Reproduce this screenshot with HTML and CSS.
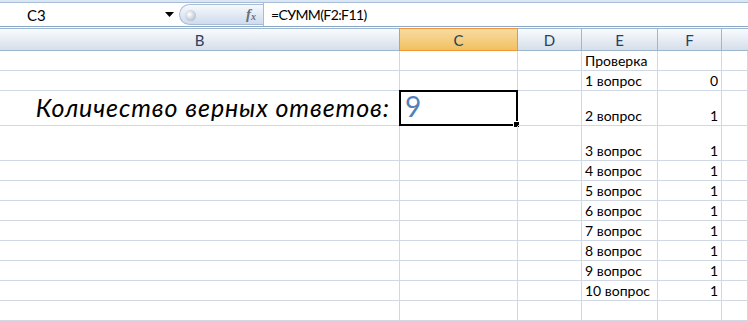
FILE: index.html
```html
<!DOCTYPE html>
<html lang="ru">
<head>
  <meta charset="UTF-8">
  <title>Проверка</title>
  <link rel="stylesheet" href="styles.css">
</head>
<body>
  <div class="ribbon-edge"></div>
  <div class="formula-bar">
    <div class="name-box">
      <span class="name">C3</span>
      <svg class="drop" width="9" height="5" viewBox="0 0 9 5"><path d="M0 0h9L4.5 5z" fill="#000"/></svg>
    </div>
    <div class="fx-pill">
      <span class="knob"></span>
      <span class="fx">f<sub>x</sub></span>
    </div>
    <div class="formula">=СУММ(F2:F11)</div>
  </div>

  <div class="sheet">
    <div class="hd">B</div>
    <div class="hd sel">C</div>
    <div class="hd">D</div>
    <div class="hd">E</div>
    <div class="hd">F</div>
    <div class="hd last"></div>

    <div class="c"></div><div class="c"></div><div class="c"></div><div class="c">Проверка</div><div class="c"></div><div class="c"></div>
    <div class="c"></div><div class="c"></div><div class="c"></div><div class="c">1 вопрос</div><div class="c num">0</div><div class="c"></div>
    <div class="c label">Количество верных ответов:</div>
    <div class="c active"><span class="big">9</span><span class="handle"></span></div>
    <div class="c"></div><div class="c">2 вопрос</div><div class="c num">1</div><div class="c"></div>
    <div class="c"></div><div class="c"></div><div class="c"></div><div class="c">3 вопрос</div><div class="c num">1</div><div class="c"></div>
    <div class="c"></div><div class="c"></div><div class="c"></div><div class="c">4 вопрос</div><div class="c num">1</div><div class="c"></div>
    <div class="c"></div><div class="c"></div><div class="c"></div><div class="c">5 вопрос</div><div class="c num">1</div><div class="c"></div>
    <div class="c"></div><div class="c"></div><div class="c"></div><div class="c">6 вопрос</div><div class="c num">1</div><div class="c"></div>
    <div class="c"></div><div class="c"></div><div class="c"></div><div class="c">7 вопрос</div><div class="c num">1</div><div class="c"></div>
    <div class="c"></div><div class="c"></div><div class="c"></div><div class="c">8 вопрос</div><div class="c num">1</div><div class="c"></div>
    <div class="c"></div><div class="c"></div><div class="c"></div><div class="c">9 вопрос</div><div class="c num">1</div><div class="c"></div>
    <div class="c"></div><div class="c"></div><div class="c"></div><div class="c">10 вопрос</div><div class="c num">1</div><div class="c"></div>
    <div class="c"></div><div class="c"></div><div class="c"></div><div class="c"></div><div class="c"></div><div class="c"></div>
  </div>
</body>
</html>
```

FILE: styles.css
```css
body {
  margin: 0;
  padding: 0;
  background: #fff;
  font-family: Lato, "Liberation Sans", sans-serif;
  overflow: hidden;
}
.ribbon-edge {
  height: 2px;
  background: #dbe6f4;
  border-bottom: 1px solid #a7bcd6;
}
.formula-bar {
  display: flex;
  height: 23px;
  border-bottom: 1px solid #8ba7c9;
  font-size: 15px;
}
.name-box {
  width: 179px;
  display: flex;
  align-items: center;
  box-sizing: border-box;
  padding: 0 5px 0 27px;
}
.name {
  flex: 1;
  color: #000;
}
.fx-pill {
  position: relative;
  width: 84px;
  margin: 1px 0;
  display: flex;
  align-items: center;
  justify-content: flex-end;
  box-sizing: border-box;
  padding-right: 7px;
  border: 1px solid #a9bcd6;
  border-right: none;
  border-radius: 11px 0 0 11px;
  background: linear-gradient(#f7fafe, #dfe8f4 55%, #cfdcee);
}
.knob {
  position: absolute;
  left: 5px;
  top: 5px;
  width: 11px;
  height: 11px;
  border-radius: 50%;
  background: radial-gradient(circle at 40% 40%, #fff, #c4ccd6 60%, #9aa6b4);
}
.fx {
  font-family: "Liberation Serif", serif;
  font-style: italic;
  font-weight: bold;
  font-size: 15px;
  color: #6b6f75;
}
.fx sub {
  font-size: 10px;
  vertical-align: -1px;
}
.formula {
  flex: 1;
  display: flex;
  align-items: center;
  padding-left: 7px;
  border-left: 1px solid #a9bcd6;
  font-size: 14px;
  letter-spacing: -0.6px;
  color: #000;
}
.sheet {
  display: grid;
  grid-template-columns: 400px 118px 64px 76px 64px 1fr;
  grid-template-rows: 22px 20px 20px 35px 35px repeat(8, 20px);
  border-top: 1px solid #9eb6ce;
  margin-top: 1px;
  font-size: 14px;
}
.hd {
  display: flex;
  align-items: center;
  justify-content: center;
  font-size: 15px;
  color: #27415f;
  background: linear-gradient(#f9fbfd, #e4eaf3 60%, #d6deea);
  border-right: 1px solid #9eb6ce;
  border-bottom: 1px solid #9eb6ce;
}
.hd.sel {
  background: linear-gradient(#f9dba2, #f1c15f);
  border: 1px solid #f29536;
  margin-left: -1px;
  margin-top: -1px;
}
.hd.last {
  border-right: none;
}
.c {
  position: relative;
  display: flex;
  align-items: flex-end;
  padding: 0 3px 1px;
  border-right: 1px solid #d0d7e5;
  border-bottom: 1px solid #d0d7e5;
  color: #000;
  white-space: nowrap;
}
.c.num {
  justify-content: flex-end;
}
.c.label {
  justify-content: flex-end;
  padding: 0 9px 3px 0;
  font-size: 25px;
  font-style: italic;
  letter-spacing: 0.9px;
}
.c.active {
  border: 2px solid #000;
  margin: -1px 0 0 -1px;
  padding: 0 0 4px 4px;
}
.big {
  font-size: 28px;
  line-height: 1;
  color: #4f81bd;
}
.handle {
  position: absolute;
  right: -4px;
  bottom: -4px;
  width: 5px;
  height: 5px;
  background: #000;
  border: 1px solid #fff;
}
```
